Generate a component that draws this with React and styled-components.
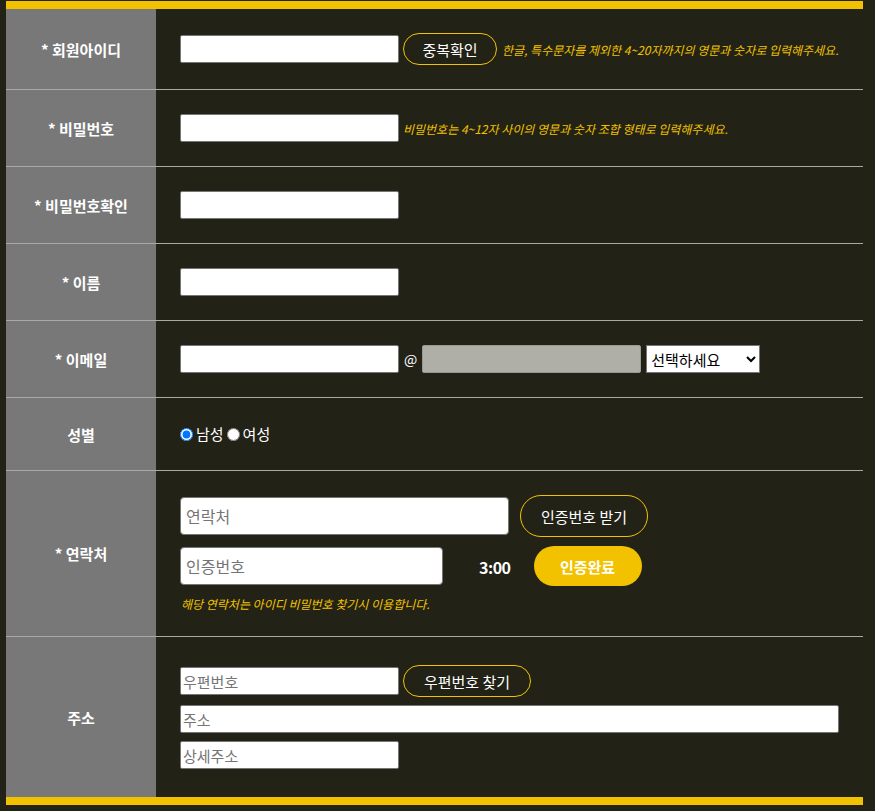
import React, {useState} from 'react'
import styled, {createGlobalStyle} from 'styled-components'

const GlobalStyle = createGlobalStyle`
    html, body {
        margin: 0;
        background-color: #222216;
    }
    body {
        font-family: "Noto Sans CJK KR", "Noto Sans", sans-serif;
    }
`

const App = () => {
    const [gender, setGender] = useState('m')

    return (
        <>
            <GlobalStyle />
            <Page>
                <FormTable>
                    <Row>
                        <Label>* 회원아이디</Label>
                        <Cell>
                            <TextInput type="text" />
                            <OutlineButton $w={94} $h={32}>중복확인</OutlineButton>
                            <Hint $gap={5}>한글, 특수문자를 제외한 4~20자까지의 영문과 숫자로 입력해주세요.</Hint>
                        </Cell>
                    </Row>

                    <Row>
                        <Label>* 비밀번호</Label>
                        <Cell>
                            <TextInput type="password" />
                            <Hint $gap={4}>비밀번호는 4~12자 사이의 영문과 숫자 조합 형태로 입력해주세요.</Hint>
                        </Cell>
                    </Row>

                    <Row>
                        <Label>* 비밀번호확인</Label>
                        <Cell>
                            <TextInput type="password" />
                        </Cell>
                    </Row>

                    <Row>
                        <Label>* 이름</Label>
                        <Cell>
                            <TextInput type="text" />
                        </Cell>
                    </Row>

                    <Row>
                        <Label>* 이메일</Label>
                        <Cell>
                            <TextInput type="text" />
                            <At>@</At>
                            <TextInput type="text" disabled />
                            <DomainSelect defaultValue="">
                                <option value="">선택하세요</option>
                                <option value="naver.com">naver.com</option>
                                <option value="gmail.com">gmail.com</option>
                            </DomainSelect>
                        </Cell>
                    </Row>

                    <Row>
                        <Label>성별</Label>
                        <Cell $short>
                            <RadioLabel>
                                <Radio type="radio" name="gender" checked={gender === 'm'} onChange={() => setGender('m')} />
                                남성
                            </RadioLabel>
                            <RadioLabel>
                                <Radio type="radio" name="gender" checked={gender === 'f'} onChange={() => setGender('f')} />
                                여성
                            </RadioLabel>
                        </Cell>
                    </Row>

                    <Row>
                        <Label>* 연락처</Label>
                        <StackCell $gap={9}>
                            <Line>
                                <RoundInput $w={329} placeholder="연락처" />
                                <OutlineButton $w={128} $h={42} $gap={11}>인증번호 받기</OutlineButton>
                            </Line>
                            <Line>
                                <RoundInput $w={263} placeholder="인증번호" />
                                <Timer>3:00</Timer>
                                <FillButton>인증완료</FillButton>
                            </Line>
                            <Hint $gap={1}>해당 연락처는 아이디 비밀번호 찾기시 이용합니다.</Hint>
                        </StackCell>
                    </Row>

                    <Row $last>
                        <Label>주소</Label>
                        <StackCell $gap={8} $pad={28}>
                            <Line>
                                <TextInput type="text" placeholder="우편번호" />
                                <OutlineButton $w={128} $h={32}>우편번호 찾기</OutlineButton>
                            </Line>
                            <TextInput type="text" placeholder="주소" $w={659} />
                            <TextInput type="text" placeholder="상세주소" />
                        </StackCell>
                    </Row>
                </FormTable>
            </Page>
        </>
    )
}

const Page = styled.div`
    padding: 1px 12px 6px 6px;
`

const FormTable = styled.div`
    width: 857px;
    border-top: 8px solid #f2c200;
    border-bottom: 8px solid #f2c200;
`

const Row = styled.div`
    display: flex;
    border-bottom: ${props => props.$last ? 'none' : '1px solid #aaaaa4'};
`

const Label = styled.div`
    width: 150px;
    flex-shrink: 0;
    display: flex;
    align-items: center;
    justify-content: center;
    background-color: #787878;
    color: #ffffff;
    font-size: 15px;
    font-weight: 700;
`

const Cell = styled.div`
    flex: 1;
    display: flex;
    align-items: center;
    padding: 24px;
    min-height: ${props => props.$short ? '24px' : '28px'};
    white-space: nowrap;
`

const StackCell = styled.div`
    flex: 1;
    display: flex;
    flex-direction: column;
    align-items: flex-start;
    gap: ${props => props.$gap}px;
    padding: ${props => props.$pad || 24}px 24px;
`

const Line = styled.div`
    display: flex;
    align-items: center;
`

const TextInput = styled.input`
    box-sizing: border-box;
    width: ${props => props.$w || 219}px;
    height: 28px;
    margin: 0;
    padding: 1px 2px;
    border: 1px solid #767676;
    border-radius: 2px;
    background-color: #ffffff;
    font-family: inherit;
    font-size: 15px;
    color: #000;
    outline: none;

    &::placeholder {
        color: #757575;
    }

    &:disabled {
        background-color: #afafa8;
        border-color: #9a9a94;
    }
`

const RoundInput = styled.input`
    box-sizing: border-box;
    width: ${props => props.$w}px;
    height: 38px;
    margin: 0;
    padding: 0 5px;
    border: 1px solid #767676;
    border-radius: 4px;
    background-color: #ffffff;
    font-family: inherit;
    font-size: 16px;
    outline: none;

    &::placeholder {
        color: #757575;
    }
`

const OutlineButton = styled.button`
    box-sizing: border-box;
    width: ${props => props.$w}px;
    height: ${props => props.$h}px;
    margin-left: ${props => props.$gap || 4}px;
    padding: 0;
    border: 1px solid #f2c200;
    border-radius: 22px;
    background-color: transparent;
    color: #ffffff;
    font-family: inherit;
    font-size: 15px;
    cursor: pointer;
`

const FillButton = styled.button`
    box-sizing: border-box;
    width: 108px;
    height: 40px;
    padding: 0;
    border: none;
    border-radius: 20px;
    background-color: #f2c200;
    color: #ffffff;
    font-family: inherit;
    font-size: 15px;
    font-weight: 700;
    cursor: pointer;
`

const Timer = styled.span`
    margin: 2px 23px 0 36px;
    color: #ffffff;
    font-size: 16px;
    font-weight: 700;
    letter-spacing: -0.5px;
`

const Hint = styled.span`
    margin-left: ${props => props.$gap}px;
    color: #f2c200;
    font-size: 12px;
    font-style: italic;
    white-space: nowrap;
`

const At = styled.span`
    margin: 0 5px;
    color: #ffffff;
    font-size: 14px;
`

const DomainSelect = styled.select`
    box-sizing: border-box;
    width: 114px;
    height: 28px;
    margin-left: 5px;
    border: 1px solid #767676;
    border-radius: 0;
    background-color: #ffffff;
    font-family: inherit;
    font-size: 15px;
    color: #000;
`

const RadioLabel = styled.label`
    display: flex;
    align-items: center;
    margin-right: 3px;
    color: #ffffff;
    font-size: 15px;
    line-height: 24px;
`

const Radio = styled.input`
    width: 13px;
    height: 13px;
    margin: 0 3px 0 0;
`

export default App
